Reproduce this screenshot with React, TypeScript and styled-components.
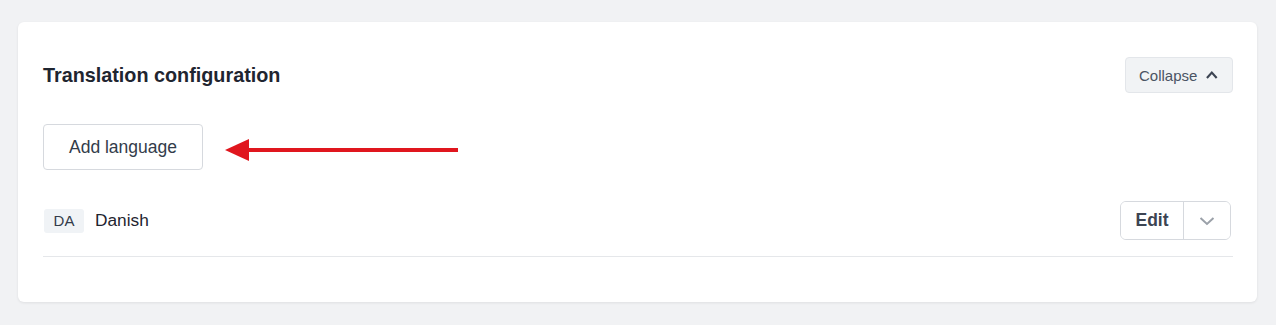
import React, { useState } from "react";
import styled, { createGlobalStyle } from "styled-components";

const GlobalStyle = createGlobalStyle`
  html, body {
    margin: 0;
    padding: 0;
    background: #f1f2f4;
    font-family: "Liberation Sans", Arial, sans-serif;
  }
`;

const Page = styled.div`
  padding: 22px 19px 23px 18px;
  height: 325px;
  box-sizing: border-box;
`;

const Card = styled.section`
  background: #ffffff;
  border-radius: 6px;
  box-shadow: 0 1px 3px rgba(0, 0, 0, 0.08);
  padding: 35px 24px 45px 25px;
  box-sizing: border-box;
  height: 280px;
`;

const Header = styled.div`
  display: flex;
  align-items: center;
  justify-content: space-between;
  height: 36px;
`;

const Title = styled.h2`
  margin: 0;
  font-size: 19.8px;
  font-weight: 700;
  color: #1f2530;
`;

const CollapseButton = styled.button`
  display: flex;
  align-items: center;
  gap: 8px;
  height: 36px;
  width: 108px;
  padding: 0 13px;
  box-sizing: border-box;
  background: #f1f3f5;
  border: 1px solid #e3e6ea;
  border-radius: 4px;
  font-family: inherit;
  font-size: 15px;
  color: #4a5463;
  cursor: pointer;
`;

const ActionRow = styled.div`
  display: flex;
  align-items: center;
  margin-top: 31px;
  gap: 22px;
`;

const AddButton = styled.button`
  width: 160px;
  height: 46px;
  background: #ffffff;
  border: 1px solid #d6d9de;
  border-radius: 4px;
  font-family: inherit;
  font-size: 17.5px;
  color: #333c4a;
  cursor: pointer;
`;

const ArrowWrap = styled.div`
  display: flex;
  margin-top: 6px;
`;

const LanguageRow = styled.div`
  display: flex;
  align-items: center;
  justify-content: space-between;
  margin-top: 31px;
  padding-bottom: 16px;
  border-bottom: 1px solid #e5e7ea;
`;

const LanguageName = styled.div`
  display: flex;
  align-items: center;
  gap: 11px;
  font-size: 17.3px;
  color: #1f2530;
  padding-left: 1px;
`;

const Code = styled.span`
  display: inline-flex;
  align-items: center;
  justify-content: center;
  width: 40px;
  height: 24px;
  background: #f0f3f6;
  border-radius: 3px;
  font-size: 15px;
  color: #333c4a;
`;

const SplitButton = styled.div`
  display: flex;
  height: 39px;
  box-sizing: border-box;
  border: 1px solid #d6d9de;
  border-radius: 6px;
  overflow: hidden;
  margin-right: 2px;
`;

const SplitPart = styled.button<{ $wide?: boolean }>`
  display: flex;
  align-items: center;
  justify-content: center;
  width: ${(p) => (p.$wide ? "62px" : "47px")};
  background: #ffffff;
  border: none;
  border-left: ${(p) => (p.$wide ? "none" : "1px solid #d6d9de")};
  font-family: inherit;
  font-size: 17.5px;
  font-weight: 700;
  color: #3c4452;
  cursor: pointer;
  padding: 0;
`;

const Arrow = () => (
  <ArrowWrap>
    <svg width="236" height="24" viewBox="0 0 236 24">
      <polygon points="0,12 24,1 24,23" fill="#e0161e" />
      <rect x="20" y="10" width="213" height="4" fill="#e0161e" />
    </svg>
  </ArrowWrap>
);

export default function App() {
  const [open, setOpen] = useState(true);
  return (
    <>
      <GlobalStyle />
      <Page>
        <Card>
          <Header>
            <Title>Translation configuration</Title>
            <CollapseButton onClick={() => setOpen(!open)}>
              Collapse
              <svg width="14" height="14" viewBox="0 0 14 14">
                <path d="M2 10 L7 4.5 L12 10" fill="none" stroke="#3c4452" strokeWidth="2.2" />
              </svg>
            </CollapseButton>
          </Header>
          <ActionRow>
            <AddButton>Add language</AddButton>
            <Arrow />
          </ActionRow>
          <LanguageRow>
            <LanguageName>
              <Code>DA</Code>
              Danish
            </LanguageName>
            <SplitButton>
              <SplitPart $wide>Edit</SplitPart>
              <SplitPart>
                <svg width="18" height="18" viewBox="0 0 18 18">
                  <path d="M2.5 6 L9 12 L15.5 6" fill="none" stroke="#9ba1a9" strokeWidth="2" />
                </svg>
              </SplitPart>
            </SplitButton>
          </LanguageRow>
        </Card>
      </Page>
    </>
  );
}
